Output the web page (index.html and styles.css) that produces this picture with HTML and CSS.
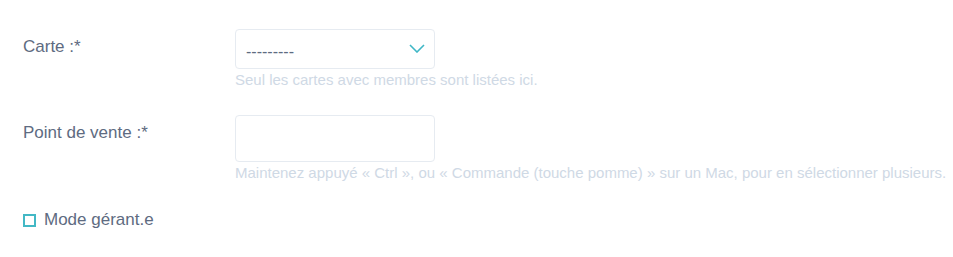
FILE: index.html
```html
<!DOCTYPE html>
<html lang="fr">
<head>
<meta charset="utf-8">
<title>Formulaire</title>
<link rel="stylesheet" href="styles.css">
</head>
<body>
<form class="form">
  <div class="row row-carte">
    <label class="label">Carte :*</label>
    <div class="field">
      <div class="select">
        <span class="select-value">---------</span>
        <svg class="chevron" width="16" height="9" viewBox="0 0 16 9"><path d="M1 1 L8 8 L15 1" fill="none" stroke="#3fb7c6" stroke-width="1.6"/></svg>
      </div>
      <div class="help">Seul les cartes avec membres sont listées ici.</div>
    </div>
  </div>
  <div class="row row-pdv">
    <label class="label">Point de vente :*</label>
    <div class="field">
      <div class="multi"></div>
      <div class="help">Maintenez appuyé « Ctrl », ou « Commande (touche pomme) » sur un Mac, pour en sélectionner plusieurs.</div>
    </div>
  </div>
  <label class="check">
    <span class="box"></span>
    <span class="check-text">Mode gérant.e</span>
  </label>
</form>
</body>
</html>
```

FILE: styles.css
```css
html, body {
  margin: 0;
  padding: 0;
  background: #ffffff;
}
body {
  font-family: "Liberation Sans", Arial, sans-serif;
  color: #5e6b81;
}
.form {
  padding: 29px 0 0 23px;
  display: flex;
  flex-direction: column;
}
.row {
  display: flex;
  align-items: flex-start;
}
.label {
  width: 212px;
  font-size: 17px;
  line-height: 20px;
  padding-top: 8px;
  color: #5e6b81;
}
.field {
  display: flex;
  flex-direction: column;
}
.select {
  box-sizing: border-box;
  width: 200px;
  height: 40px;
  border: 1px solid #e6ebf1;
  border-radius: 4px;
  display: flex;
  align-items: center;
  justify-content: space-between;
  padding: 0 9px 0 10px;
}
.select-value {
  font-size: 16px;
  line-height: 20px;
  color: #5e6b81;
  padding-top: 5px;
}
.chevron {
  display: block;
  margin-top: -1px;
}
.help {
  font-size: 15px;
  line-height: 18px;
  color: #cfd9e5;
  margin-top: 2px;
}
.row-pdv {
  margin-top: 26px;
}
.multi {
  box-sizing: border-box;
  width: 200px;
  height: 47px;
  border: 1px solid #e6ebf1;
  border-radius: 4px;
}
.check {
  display: flex;
  align-items: center;
  margin-top: 28px;
  font-size: 17px;
  color: #5e6b81;
}
.box {
  box-sizing: border-box;
  width: 13px;
  height: 13px;
  border: 2px solid #43b8c5;
  margin-right: 8px;
}
```
